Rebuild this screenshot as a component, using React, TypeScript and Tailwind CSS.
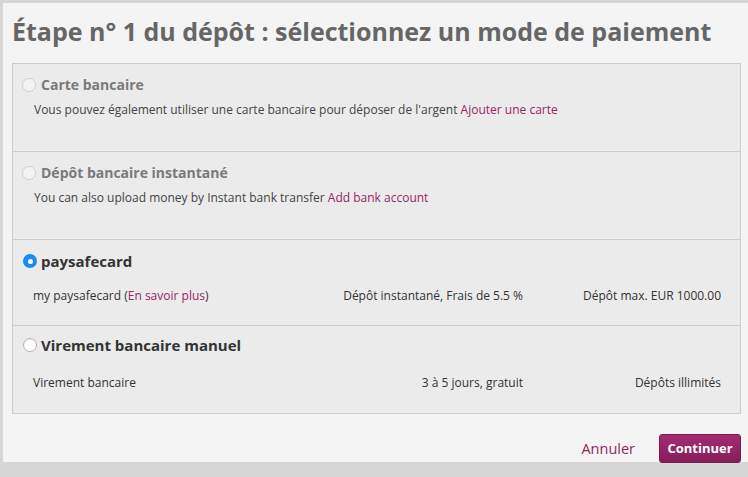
const font = { fontFamily: '"Open Sans", "Noto Sans", Arial, sans-serif' };

function Radio({ state }: { state: 'disabled' | 'checked' | 'empty' }) {
  if (state === 'checked') {
    return (
      <span className="flex h-[14px] w-[14px] items-center justify-center rounded-full bg-[#1a8cf0]">
        <span className="h-[5px] w-[5px] rounded-full bg-white" />
      </span>
    );
  }
  return (
    <span
      className={
        state === 'disabled'
          ? 'h-[14px] w-[14px] rounded-full border border-[#cfcfcf] bg-[#f3f3f3]'
          : 'h-[14px] w-[14px] rounded-full border border-[#b5b5b5] bg-white shadow-[inset_0_1px_1px_rgba(0,0,0,0.08)]'
      }
    />
  );
}

function SimpleOption({ title, text, link }: { title: string; text: string; link: string }) {
  return (
    <div className="h-[88px] border-b border-[#cccccc] px-[9px] pt-[10px]">
      <div className="flex items-center gap-[5px]">
        <Radio state="disabled" />
        <span className="text-[14px] font-bold text-[#7a7a7a]">{title}</span>
      </div>
      <p className="mt-[6px] pl-[12px] text-[12px] text-[#444]">
        {text} <span className="text-[#9a2465]">{link}</span>
      </p>
    </div>
  );
}

function TableOption({
  title,
  checked,
  first,
  middle,
  last,
  last_row,
}: {
  title: string;
  checked: boolean;
  first: React.ReactNode;
  middle: string;
  last: string;
  last_row?: boolean;
}) {
  return (
    <div className={last_row ? 'h-[87px] px-[10px] pt-[8px]' : 'h-[86px] border-b border-[#cccccc] px-[10px] pt-[10px]'}>
      <div className="flex items-center gap-[4px]">
        <Radio state={checked ? 'checked' : 'empty'} />
        <span className="text-[15px] font-bold text-[#333]">{title}</span>
      </div>
      <div
        className={
          last_row
            ? 'mt-[17px] grid grid-cols-[1fr_262px_198px] pl-[10px] pr-[9px] text-[12px] text-[#333]'
            : 'mt-[14px] grid grid-cols-[1fr_262px_198px] pl-[10px] pr-[9px] text-[12px] text-[#333]'
        }
      >
        <span>{first}</span>
        <span className="text-right">{middle}</span>
        <span className="text-right">{last}</span>
      </div>
    </div>
  );
}

export default function App() {
  return (
    <div className="h-[477px] w-[748px] overflow-hidden bg-[#d6d6d6] pl-[3px] pt-[3px]" style={font}>
      <div className="h-[459px] w-[745px] bg-[#f4f4f4] pl-[9px] pr-[4px]">
        <h1 className="pt-[12px] text-[25px] font-bold leading-[32px] text-[#666]">
          Étape n° 1 du dépôt : sélectionnez un mode de paiement
        </h1>
        <div className="mt-[16px] w-[729px] border border-[#cccccc] bg-[#ebebeb]">
          <SimpleOption
            title="Carte bancaire"
            text="Vous pouvez également utiliser une carte bancaire pour déposer de l'argent"
            link="Ajouter une carte"
          />
          <SimpleOption
            title="Dépôt bancaire instantané"
            text="You can also upload money by Instant bank transfer"
            link="Add bank account"
          />
          <TableOption
            title="paysafecard"
            checked
            first={
              <>
                my paysafecard (<span className="text-[#9a2465]">En savoir plus</span>)
              </>
            }
            middle="Dépôt instantané, Frais de 5.5 %"
            last="Dépôt max. EUR 1000.00"
          />
          <TableOption
            title="Virement bancaire manuel"
            checked={false}
            first="Virement bancaire"
            middle="3 à 5 jours, gratuit"
            last="Dépôts illimités"
            last_row
          />
        </div>
        <div className="mt-[20px] flex w-[729px] items-center justify-end gap-[24px]">
          <button type="button" className="text-[14.5px] text-[#8c2a60]">
            Annuler
          </button>
          <button
            type="button"
            className="h-[29px] w-[82px] rounded-[3px] border border-[#7a1c52] bg-gradient-to-b from-[#a42c72] to-[#851d58] text-[13px] font-bold text-white"
          >
            Continuer
          </button>
        </div>
      </div>
    </div>
  );
}
